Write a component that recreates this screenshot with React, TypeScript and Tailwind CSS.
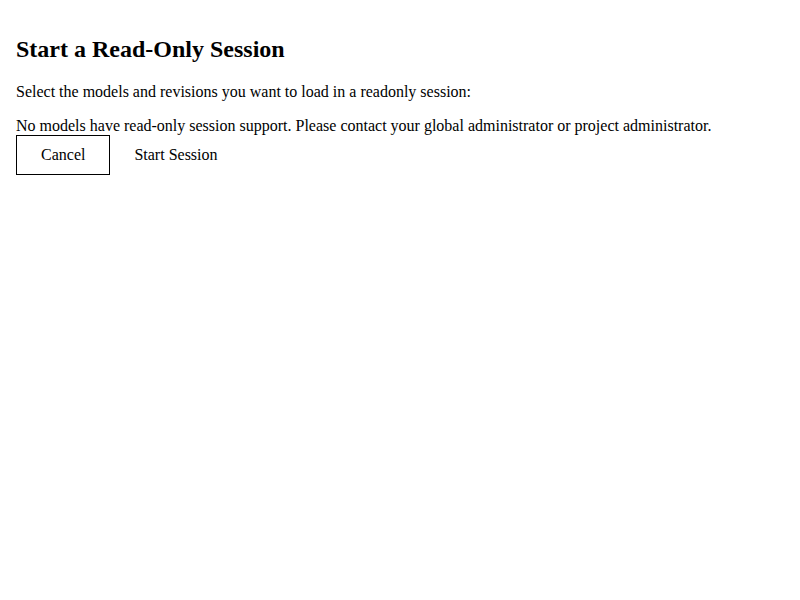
export default function App() {
  return (
    <div className="min-h-screen bg-white p-4 font-['Liberation_Serif',serif] text-[16px] text-black leading-[normal]">
      <h2 className="mt-[19.92px] mb-[19.92px] text-[24px] font-bold">Start a Read-Only Session</h2>
      <p className="mb-4">Select the models and revisions you want to load in a readonly session:</p>
      <div>
        No models have read-only session support. Please contact your global administrator or project administrator.
      </div>
      <div className="flex">
        <button className="h-10 border border-black px-6">Cancel</button>
        <button className="h-10 px-6">Start Session</button>
      </div>
    </div>
  )
}
